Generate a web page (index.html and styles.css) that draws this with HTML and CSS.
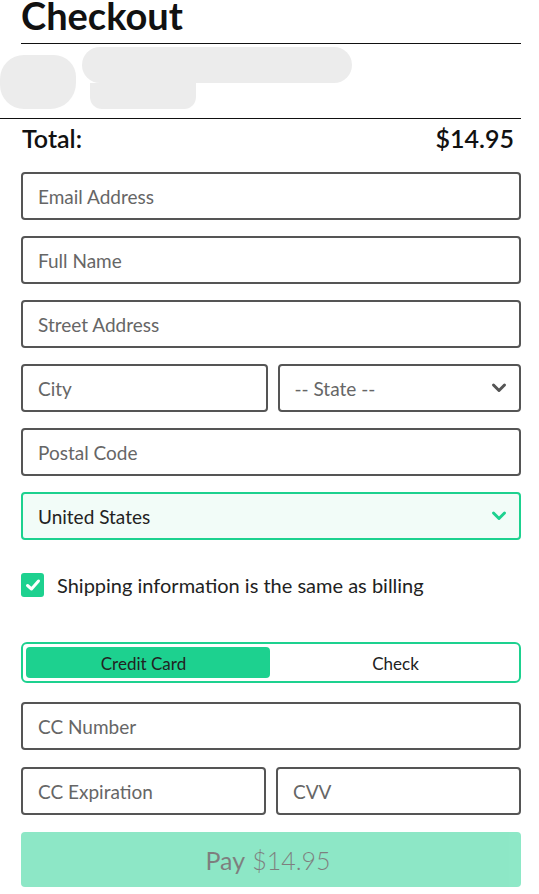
FILE: index.html
```html
<!DOCTYPE html>
<html lang="en">
<head>
<meta charset="utf-8">
<title>Checkout</title>
<link rel="stylesheet" href="styles.css">
</head>
<body>
<div class="page">
  <h1 class="title">Checkout</h1>
  <div class="summary">
    <div class="thumb"></div>
    <div class="lines">
      <div class="line-long"></div>
      <div class="line-short"></div>
    </div>
  </div>
  <div class="total">
    <span>Total:</span>
    <span>$14.95</span>
  </div>
  <form class="form">
    <div class="field"><span class="ph">Email Address</span></div>
    <div class="field"><span class="ph">Full Name</span></div>
    <div class="field"><span class="ph">Street Address</span></div>
    <div class="row">
      <div class="field"><span class="ph">City</span></div>
      <div class="field select"><span class="ph">-- State --</span>
        <svg class="chev" width="16" height="12" viewBox="0 0 16 12"><path d="M2.5 3 L8 8.5 L13.5 3" fill="none" stroke="#555" stroke-width="3" stroke-linecap="round" stroke-linejoin="round"/></svg>
      </div>
    </div>
    <div class="field"><span class="ph">Postal Code</span></div>
    <div class="field select active"><span class="val">United States</span>
      <svg class="chev" width="16" height="12" viewBox="0 0 16 12"><path d="M2.5 3 L8 8.5 L13.5 3" fill="none" stroke="#1dd18f" stroke-width="3" stroke-linecap="round" stroke-linejoin="round"/></svg>
    </div>
    <label class="check">
      <span class="box"><svg width="16" height="14" viewBox="0 0 16 14"><path d="M2.5 7.5 L6.5 11 L13.5 3" fill="none" stroke="#fff" stroke-width="3" stroke-linecap="round" stroke-linejoin="round"/></svg></span>
      <span class="check-label">Shipping information is the same as billing</span>
    </label>
    <div class="tabs">
      <div class="tab on">Credit Card</div>
      <div class="tab off">Check</div>
    </div>
    <div class="field cc"><span class="ph">CC Number</span></div>
    <div class="row cc2">
      <div class="field"><span class="ph">CC Expiration</span></div>
      <div class="field"><span class="ph">CVV</span></div>
    </div>
    <div class="pay">Pay <span class="pay-amt">$14.95</span></div>
  </form>
</div>
</body>
</html>
```
FILE: styles.css
```css
* { box-sizing: border-box; }
html, body { margin: 0; padding: 0; background: #fff; }
body { font-family: Lato, "Noto Sans", sans-serif; color: #222; }
.page { width: 500px; margin-left: 21px; }
.title {
  margin: 0;
  font-size: 38px;
  font-weight: 700;
  line-height: 31px;
  color: #111;
  padding-bottom: 12px;
  border-bottom: 1px solid #111;
}
.summary {
  height: 75px;
  border-bottom: 1px solid #111;
  display: flex;
  gap: 6px;
  margin-left: -21px;
  padding-top: 3px;
}
.thumb {
  width: 76px;
  height: 54px;
  margin-top: 8px;
  background: #ececec;
  border-radius: 24px 22px 26px 24px;
}
.lines { display: flex; flex-direction: column; }
.line-long { width: 270px; height: 36px; background: #ececec; border-radius: 18px; }
.line-short { width: 106px; height: 26px; background: #ececec; border-radius: 0 0 12px 12px; margin-left: 8px; }
.total {
  display: flex;
  justify-content: space-between;
  font-size: 25px;
  font-weight: 600;
  color: #111;
  padding: 5px 7px 0 1px;
  line-height: 29px;
}
.form { display: flex; flex-direction: column; margin-top: 19px; }
.field {
  height: 48px;
  border: 2px solid #555;
  border-radius: 4px;
  display: flex;
  align-items: center;
  padding: 0 15px;
  font-size: 19px;
  margin-bottom: 16px;
}
.ph { color: #666; }
.val { color: #222; }
.row { display: flex; gap: 10px; }
.row .field { flex: 1; }
.select { justify-content: space-between; padding-right: 12px; }
.active { border-color: #1dd18f; background: #f2fcf8; }
.check {
  display: flex;
  align-items: center;
  gap: 13px;
  margin-top: 17px;
  font-size: 20px;
  color: #222;
}
.box {
  width: 23px; height: 24px;
  background: #1dd18f;
  border-radius: 3px;
  display: flex; align-items: center; justify-content: center;
}
.tabs {
  margin-top: 45px;
  height: 41px;
  border: 2px solid #1dd18f;
  border-radius: 6px;
  padding: 3px;
  display: grid;
  grid-template-columns: 1fr 1fr;
  column-gap: 2px;
  font-size: 17px;
  color: #222;
}
.tab { display: flex; align-items: center; justify-content: center; border-radius: 4px; padding-top: 1px; }
.tab.on { background: #1dd18f; padding-right: 9px; }
.tab.off { padding-left: 3px; }
.cc { margin-top: 19px; margin-bottom: 17px; }
.cc2 .field { margin-bottom: 17px; }
.pay {
  height: 55px;
  background: #1dd18f;
  opacity: .5;
  color: #000;
  border-radius: 4px;
  display: flex;
  align-items: center;
  justify-content: center;
  font-size: 25px;
  gap: 7px;
  padding-right: 6px;
}
.pay-amt { font-weight: 300; }
```
